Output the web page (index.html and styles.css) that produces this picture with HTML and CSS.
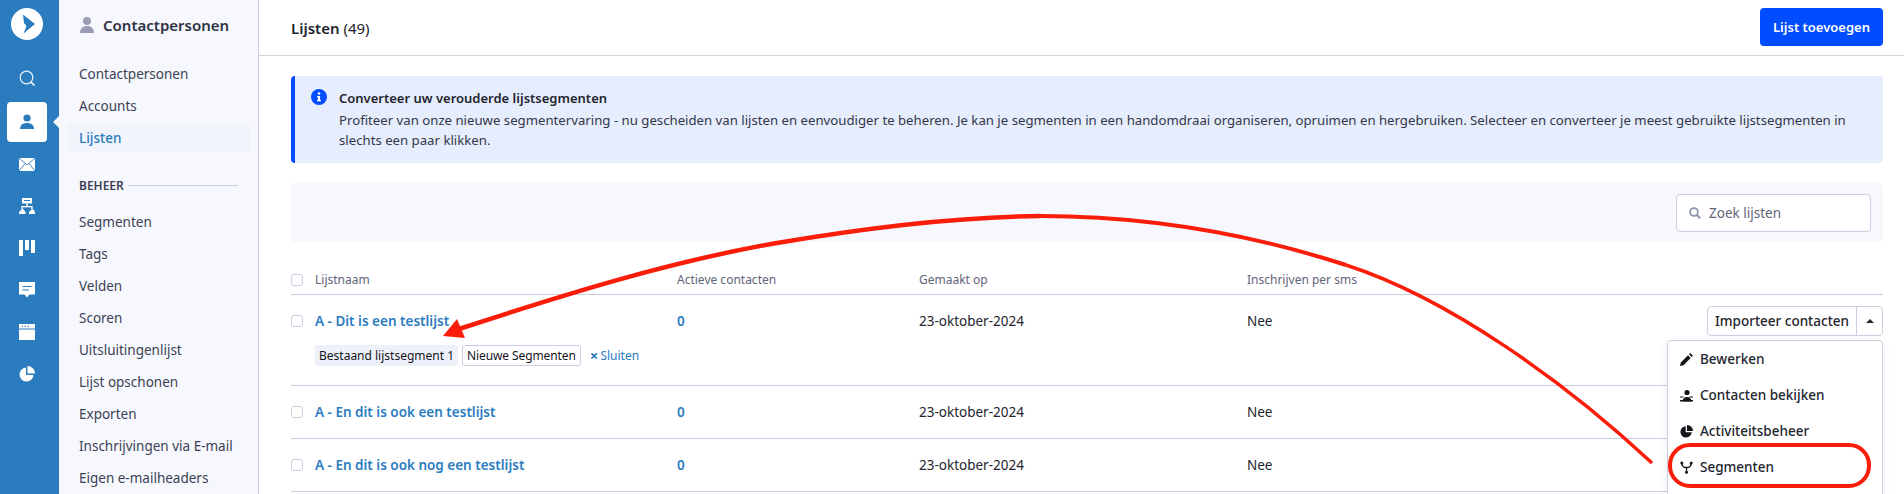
FILE: index.html
```html
<!DOCTYPE html>
<html lang="nl">
<head>
<meta charset="utf-8">
<title>Lijsten</title>
<link rel="stylesheet" href="styles.css">
</head>
<body>
<div class="app">
  <nav class="rail">
    <div class="rail-logo">
      <svg width="32" height="32" viewBox="0 0 32 32"><circle cx="16" cy="16" r="16" fill="#fff"/><path d="M12 6.500 24 16 12.500 25.500 15.500 18 13 15Z" fill="#2b7cbf"/></svg>
    </div>
    <div class="rail-item search-item"><svg width="16" height="16" viewBox="0 0 16 16"><circle cx="7.500" cy="7.500" r="6.300" fill="none" stroke="#fff" stroke-width="1.200" opacity=".9"/><path d="M12 12 15.500 15.500" stroke="#fff" stroke-width="1.500"/></svg></div>
    <div class="rail-item active"><svg width="16" height="16" viewBox="0 0 16 16"><circle cx="8" cy="4" r="3.600" fill="#2b7cbf"/><path d="M1 15c0-4 3-6 7-6s7 2 7 6z" fill="#2b7cbf"/></svg></div>
    <div class="rail-item"><svg width="16" height="13" viewBox="0 0 16 13"><rect width="16" height="13" fill="#fff"/><path d="M0 0 8 7 16 0M0 13 6 5.500M16 13 10 5.500" fill="none" stroke="#2b7cbf" stroke-width=".9"/></svg></div>
    <div class="rail-item"><svg width="16" height="16" viewBox="0 0 16 16" fill="#fff"><rect x="3" y="0" width="10" height="5.500"/><rect x="5" y="2" width="6" height="1" fill="#2b7cbf"/><rect x="7.300" y="5.500" width="1.400" height="3.500"/><rect x="2.500" y="8" width="11" height="1.300"/><path d="M3 11 0 14v2h6.500v-2L4 11zM13 11l-3 3v2h6v-2l-2-3z"/><rect x="2.500" y="8" width="1.300" height="3"/><rect x="12.200" y="8" width="1.300" height="3"/></svg></div>
    <div class="rail-item"><svg width="16" height="16" viewBox="0 0 16 16" fill="#fff"><rect width="4" height="16"/><rect x="6" width="4" height="10"/><rect x="12" width="4" height="13"/></svg></div>
    <div class="rail-item"><svg width="16" height="16" viewBox="0 0 16 16"><path d="M0 0H16V12.500H10.500L8 15.500 5.500 12.500H0Z" fill="#fff"/><path d="M3.500 4.500H12.500M3.500 8H10" stroke="#2b7cbf" stroke-width="1.100"/></svg></div>
    <div class="rail-item"><svg width="16" height="16" viewBox="0 0 16 16"><rect width="16" height="16" fill="#fff"/><rect y="4.500" width="16" height="1" fill="#2b7cbf"/><path d="M2.500 2.300H4M5.500 2.300H7M8.500 2.300H10" stroke="#2b7cbf" stroke-width="1"/></svg></div>
    <div class="rail-item"><svg width="16" height="16" viewBox="0 0 16 16" fill="#fff"><path d="M7 1.500A7 7 0 1 0 14.500 9H7Z"/><path d="M8.500 0A7.500 7.500 0 0 1 16 7.500H8.500Z"/></svg></div>
  </nav>

  <aside class="side">
    <div class="side-title">
      <svg width="14" height="16" viewBox="0 0 14 16" fill="#9a9db5"><circle cx="7" cy="4" r="4"/><path d="M0 16c0-4.500 3-7 7-7s7 2.500 7 7z"/></svg>
      <span>Contactpersonen</span>
    </div>
    <ul class="side-list first">
      <li>Contactpersonen</li>
      <li>Accounts</li>
      <li class="current">Lijsten</li>
    </ul>
    <div class="side-head"><span>BEHEER</span><i></i></div>
    <ul class="side-list">
      <li>Segmenten</li>
      <li>Tags</li>
      <li>Velden</li>
      <li>Scoren</li>
      <li>Uitsluitingenlijst</li>
      <li>Lijst opschonen</li>
      <li>Exporten</li>
      <li>Inschrijvingen via E-mail</li>
      <li>Eigen e-mailheaders</li>
    </ul>
  </aside>

  <main class="main">
    <header class="top">
      <h1><b>Lijsten</b> (49)</h1>
      <button class="primary">Lijst toevoegen</button>
    </header>
    <div class="content">
      <section class="notice">
        <svg class="notice-icon" width="16" height="16" viewBox="0 0 16 16"><circle cx="8" cy="8" r="8" fill="#004cff"/><rect x="6.900" y="7" width="2.200" height="5" fill="#fff"/><rect x="6" y="11" width="4" height="1.300" fill="#fff"/><rect x="6" y="7" width="2" height="1.200" fill="#fff"/><circle cx="8" cy="4.500" r="1.300" fill="#fff"/></svg>
        <div class="notice-body">
          <strong>Converteer uw verouderde lijstsegmenten</strong>
          <p>Profiteer van onze nieuwe segmentervaring - nu gescheiden van lijsten en eenvoudiger te beheren. Je kan je segmenten in een handomdraai organiseren, opruimen en hergebruiken. Selecteer en converteer je meest gebruikte lijstsegmenten in slechts een paar klikken.</p>
        </div>
      </section>

      <section class="toolbar">
        <div class="search">
          <svg width="12" height="12" viewBox="0 0 12 12"><circle cx="5" cy="5" r="3.900" fill="none" stroke="#8d93ab" stroke-width="1.800"/><path d="M8 8 11.200 11.200" stroke="#8d93ab" stroke-width="2"/></svg>
          <span>Zoek lijsten</span>
        </div>
      </section>

      <section class="table">
        <div class="row head">
          <div class="c-name"><span class="check"></span>Lijstnaam</div>
          <div class="c-count">Actieve contacten</div>
          <div class="c-date">Gemaakt op</div>
          <div class="c-sms">Inschrijven per sms</div>
        </div>
        <div class="row body open">
          <div class="row-main">
            <div class="c-name"><span class="check"></span><a>A - Dit is een testlijst</a></div>
            <div class="c-count"><a>0</a></div>
            <div class="c-date">23-oktober-2024</div>
            <div class="c-sms">Nee</div>
            <div class="split">
              <span class="split-main">Importeer contacten</span>
              <span class="split-caret"><i></i></span>
            </div>
          </div>
          <div class="chips">
            <span class="chip filled">Bestaand lijstsegment 1</span>
            <span class="chip narrow">Nieuwe Segmenten</span>
            <a class="close"><b>×</b>Sluiten</a>
          </div>
        </div>
        <div class="row body">
          <div class="c-name"><span class="check"></span><a>A - En dit is ook een testlijst</a></div>
          <div class="c-count"><a>0</a></div>
          <div class="c-date">23-oktober-2024</div>
          <div class="c-sms">Nee</div>
        </div>
        <div class="row body">
          <div class="c-name"><span class="check"></span><a>A - En dit is ook nog een testlijst</a></div>
          <div class="c-count"><a>0</a></div>
          <div class="c-date">23-oktober-2024</div>
          <div class="c-sms">Nee</div>
        </div>
      </section>
    </div>
  </main>
</div>

<div class="menu">
  <div class="menu-item">
    <svg width="13" height="13" viewBox="0 0 13 13"><path d="M0 13 .8 9.500 8 2.300 10.700 5 3.500 12.200ZM9 1.300 10.200.1 12.900 2.800 11.700 4Z" fill="#14151a"/></svg>
    <span>Bewerken</span>
  </div>
  <div class="menu-item">
    <svg width="13" height="13" viewBox="0 0 13 13" fill="#14151a"><circle cx="7" cy="3.500" r="2.600"/><path d="M2.500 12.500c0-3 2-4.500 4.500-4.500s4.500 1.500 4.500 4.500zM0 7.500H3.500V8.500H0zM9.500 7.500H13V8.500H9.500z"/><path d="M0 11H13V12.500H0z"/></svg>
    <span>Contacten bekijken</span>
  </div>
  <div class="menu-item">
    <svg width="13" height="13" viewBox="0 0 16 16" fill="#14151a"><path d="M7 1.500A7 7 0 1 0 14.500 9H7Z"/><path d="M8.500 0A7.500 7.500 0 0 1 16 7.500H8.500Z"/></svg>
    <span>Activiteitsbeheer</span>
  </div>
  <div class="menu-item">
    <svg width="13" height="13" viewBox="0 0 13 13" fill="none" stroke="#14151a"><path d="M2 3C2 6 4 6.500 6.500 6.500S11 6 11 3M6.500 6.500V11" stroke-width="1.300"/><g fill="#14151a" stroke="none"><circle cx="1.800" cy="2" r="1.500"/><circle cx="11.200" cy="2" r="1.500"/><circle cx="6.500" cy="11.300" r="1.500"/></g></svg>
    <span>Segmenten</span>
  </div>
</div>

<svg class="annot" width="1904" height="494" viewBox="0 0 1904 494">
  <g fill="none" stroke="#fa1e0a">
    <path d="M1652 463C1564 381 1448 298 1346 265" stroke-width="3.500"/>
    <path d="M1346 265C1244 232 1142 216 1040 216" stroke-width="4"/>
    <path d="M1040 216C952 217 865 228 777 243C672 261 566 294 459 329" stroke-width="4.500"/>
  </g>
  <path d="M443 336 457 319 465 338Z" fill="#fa1e0a"/>
  <rect x="1670" y="445" width="199" height="41" rx="20" fill="none" stroke="#fa1e0a" stroke-width="4"/>
</svg>
</body>
</html>
```
FILE: styles.css
```css
* { box-sizing: border-box; }
html, body { margin: 0; height: 494px; overflow: hidden; background: #fff; }
body { font-family: "Noto Sans", Roboto, "Liberation Sans", sans-serif; font-size: 13px; color: #2b2e3c; position: relative; }
a { color: #2b7cbf; }
ul { list-style: none; margin: 0; padding: 0; }

.app { display: flex; height: 494px; width: 1904px; }

.rail { width: 59px; flex: none; background: #2b7cbf; display: flex; flex-direction: column; align-items: flex-start; padding: 8px 0 0 7px; }
.rail-logo { height: 32px; margin: 0 0 18px 4px; }
.rail-item { height: 42px; width: 40px; display: flex; align-items: center; justify-content: center; position: relative; }
.search-item { height: 40px; margin-bottom: 4px; }
.rail-item.active { height: 40px; background: #fff; border-radius: 4px; margin-bottom: 1px; }
.rail-item.active::after { content: ""; position: absolute; left: 46px; top: 14px; border: 6px solid transparent; border-right-color: #f6f8fe; border-left-width: 0; }

.side { width: 200px; flex: none; background: #f6f8fe; border-right: 1px solid #c9cfe0; padding: 0 8px; }
.side-title { height: 49px; display: flex; align-items: center; gap: 9px; padding-left: 13px; font-size: 15px; font-weight: 600; color: #2f3244; }
.side-list li { height: 32px; line-height: 32px; padding-left: 12px; font-size: 13.500px; color: #3b3f54; }
.side-list.first { margin-top: 9px; }
.side-list .current { height: 28px; line-height: 28px; margin: 2px 0; background: #f0f4fb; border-radius: 4px; color: #2b7cbf; font-weight: 500; }
.side-head { display: flex; align-items: center; gap: 4px; padding: 0 12px; margin-top: 17px; height: 32px; margin-bottom: 5px; font-size: 12px; font-weight: 600; color: #3b3f54; }
.side-head i { flex: 1; height: 1px; background: #c9cfe0; }

.main { flex: 1; min-width: 0; }
.top { height: 56px; border-bottom: 1px solid #d3d5da; display: flex; align-items: center; justify-content: space-between; padding: 0 21px 0 32px; }
.top h1 { margin: 0; font-size: 15px; font-weight: 400; color: #23252e; }
.top b { font-weight: 600; }
.primary { width: 123px; height: 38px; border: 0; border-radius: 4px; background: #004cff; color: #fff; font: 600 13px "Noto Sans", sans-serif; margin-top: -1px; }

.content { padding: 20px 21px 0 32px; }
.notice { height: 87px; background: #e6edfc; border-left: 4px solid #004cff; border-radius: 4px; padding: 12px 24px 0 16px; display: flex; gap: 12px; font-size: 13.200px; line-height: 20px; color: #34374a; }
.notice-icon { flex: none; margin-top: 1px; }
.notice strong { font-size: 13px; font-weight: 600; color: #23252e; }
.notice p { margin: 2px 0 0; }

.toolbar { height: 59px; margin-top: 20px; background: #f6f8fe; border-radius: 4px; padding: 11px 12px; display: flex; justify-content: flex-end; align-items: flex-start; }
.search { width: 195px; height: 38px; background: #fff; border: 1px solid #c9cfe0; border-radius: 4px; display: flex; align-items: center; gap: 8px; padding-left: 12px; font-size: 13.500px; color: #5f6479; }

.table { margin-top: 20px; }
.row { display: flex; position: relative; }
.row.head { height: 33px; border-bottom: 1px solid #c9cfe0; padding-top: 9px; align-items: flex-start; font-size: 12px; color: #5f6479; line-height: 18px; }
.c-name { width: 386px; display: flex; align-items: center; }
.c-count { width: 242px; }
.c-date { width: 328px; }
.c-sms { width: 200px; }
.check { width: 12px; height: 12px; border: 1px solid #c9cfe0; border-radius: 3px; background: #fff; margin-right: 12px; flex: none; }
.row.body { height: 53px; align-items: center; border-bottom: 1px solid #c9cfe0; font-size: 13.500px; color: #23252e; }
.row.body a { font-weight: 600; }
.row.open { display: block; height: 91px; padding-top: 12px; }
.row-main { display: flex; align-items: center; height: 28px; }
.split { margin-left: auto; width: 176px; height: 30px; display: flex; background: #fff; border: 1px solid #c9cfe0; border-radius: 4px; font-weight: 500; }
.split-main { flex: 1; border-right: 1px solid #c9cfe0; line-height: 28px; text-align: center; }
.split-caret { width: 25px; display: flex; align-items: center; justify-content: center; }
.split-caret i { border: 4px solid transparent; border-top-width: 0; border-bottom-color: #23252e; }

.chips { display: flex; align-items: center; gap: 4px; margin: 10px 0 0 24px; font-size: 12px; }
.chip { height: 21px; line-height: 19px; padding: 0 3px; border: 1px solid #c9cfe0; border-radius: 3px; color: #14151a; }
.chip.filled { border-color: #eef1f9; background: #eef1f9; }
.chip.narrow { letter-spacing: -.1px; padding: 0 4px; }
.row.body .close { margin-left: 5px; font-weight: 400; display: flex; align-items: center; gap: 2px; }
.close b { font-size: 15px; line-height: 1; }

.menu { position: absolute; left: 1667px; top: 340px; width: 216px; height: 170px; background: #fff; border: 1px solid #c9cfe0; border-radius: 4px; box-shadow: 0 2px 8px rgba(30,40,80,.08); }
.menu-item { height: 36px; display: flex; align-items: center; gap: 7px; padding-left: 12px; font-size: 13.500px; font-weight: 500; color: #23252e; }

.annot { position: absolute; left: 0; top: 0; pointer-events: none; }
```
